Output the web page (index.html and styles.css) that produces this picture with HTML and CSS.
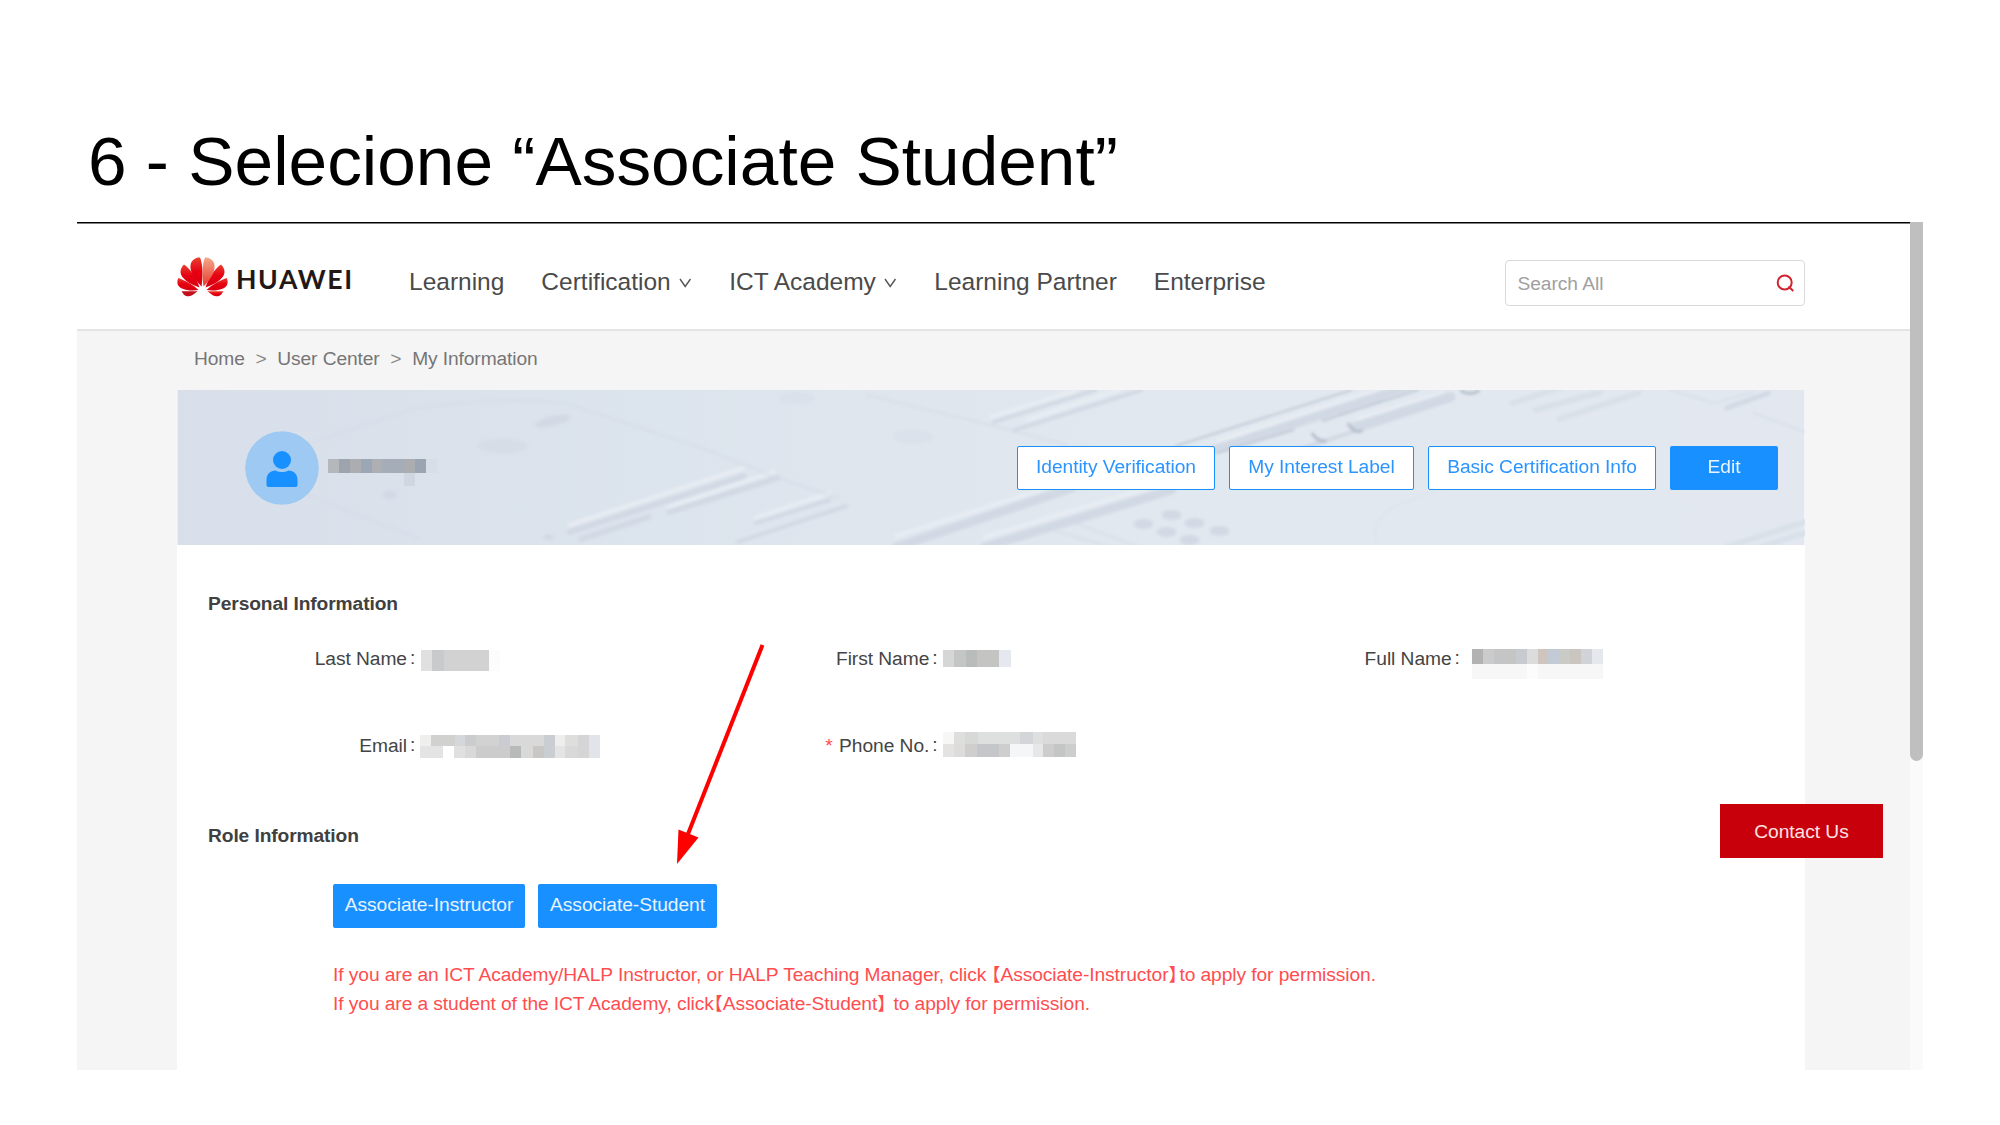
FILE: index.html
```html
<!DOCTYPE html>
<html lang="pt-BR">
<head>
<meta charset="utf-8">
<title>6 - Selecione “Associate Student”</title>
<link rel="stylesheet" href="styles.css">
</head>
<body>
<h1 class="title">6 - Selecione “Associate Student”</h1>
<div class="screen">
  <div class="page">
    <header class="header">
      <div class="logo">
        <svg class="flower" viewBox="0 0 51 40" width="51" height="40">
          <defs>
            <linearGradient id="petal" x1="0" y1="0" x2="0" y2="1"><stop offset="0" stop-color="#e8402f"/><stop offset=".5" stop-color="#e60012"/><stop offset="1" stop-color="#d8000f"/></linearGradient>
            <linearGradient id="petalLight" x1="0" y1="0" x2="0" y2="1"><stop offset="0" stop-color="#f3a98a"/><stop offset="1" stop-color="#e8372b"/></linearGradient>
          </defs>
          <g fill="url(#petal)">
            <path d="M24.500 29.500C15 20 12 12 14 6c1.500-3.500 5-5.500 9-5.500 3 7 3 18 1.500 29z"/>
            <path d="M22.500 30.500C12 27 3.500 21 3.500 15c0-3 1.500-5.500 3.500-7.500 6 4 12.500 13 15.500 23z"/>
            <path d="M21.500 33C12 34.500 2 32.500.6 27c-.6-3 0-4.500.8-6C8 23.500 16.500 28 21.500 33z"/>
            <path d="M20.500 34.200C15 39 12 40 9 39c-2-.7-3-2.500-4.500-4.800z" fill="#c5101b"/>
            <path d="M28.500 30.500C39 27 47.500 21 47.500 15c0-3-1.500-5.500-3.500-7.500-6 4-12.500 13-15.500 23z"/>
            <path d="M29.500 33C39 34.500 49 32.500 50.400 27c.6-3 0-4.500-.8-6C43 23.500 34.500 28 29.500 33z"/>
            <path d="M30.500 34.200C36 39 39 40 42 39c2-.7 3-2.500 4.500-4.800z"/>
          </g>
          <path d="M26.500 29.500C36 20 39 12 37 6c-1.500-3.500-5-5.500-9-5.500-3 7-3 18-1.500 29z" fill="url(#petalLight)"/>
        </svg>
        <span class="wordmark">HUAWEI</span>
      </div>
      <nav class="nav">
        <a>Learning</a>
        <a class="drop">Certification<svg width="13" height="10" viewBox="0 0 13 10"><path d="M1 1l5.200 7.500L11.500 1"/></svg></a>
        <a class="drop">ICT Academy<svg width="13" height="10" viewBox="0 0 13 10"><path d="M1 1l5.200 7.500L11.500 1"/></svg></a>
        <a>Learning Partner</a>
        <a>Enterprise</a>
      </nav>
      <div class="search">
        <span>Search All</span>
        <svg width="19" height="19" viewBox="0 0 19 19"><circle cx="8.700" cy="8.500" r="7"/><path d="M12.500 12.500l4.800 4.500"/></svg>
      </div>
    </header>
    <div class="crumbs"><span>Home</span><i>&gt;</i><span>User Center</span><i>&gt;</i><span>My Information</span></div>
    <main class="panel">
      <section class="banner">
        <svg class="circuit" viewBox="0 0 1627 155" width="1627" height="155">
          <defs>
            <linearGradient id="sky"><stop offset="0" stop-color="#d8dfea"/><stop offset=".3" stop-color="#dce4ed"/><stop offset=".6" stop-color="#e2e8ef"/><stop offset="1" stop-color="#e3e8f0"/></linearGradient>
            <filter id="soft" x="-5%" y="-5%" width="110%" height="110%"><feGaussianBlur stdDeviation="1.500"/></filter>
          </defs>
          <rect width="1627" height="155" fill="url(#sky)"/>
          <g filter="url(#soft)" fill="none" stroke-linecap="round">
            <g stroke="#e8edf3" stroke-width="4">
              <path d="M392 135L566 78M492 117L596 82M578 128L652 103M719 146L894 90M807 147L990 92M814 27L900 0M850 30L940 0M1040 51L1200 0M1180 29L1265 3"/>
            </g>
            <g stroke="#d1d9e4" stroke-width="6">
              <path d="M392 142L566 86M404 149L471 127M492 122L600 88"/>
              <path d="M578 133L652 110M560 152L669 116" stroke-width="4"/>
              <path d="M719 157L894 98M807 157L994 100M1036 60L1239 -6" stroke-width="9"/>
              <path d="M816 32L918 0M837 40L964 0M1120 60L1260 14" stroke-width="4"/>
              <path d="M1178 37L1273 7" stroke-width="10"/>
              <path d="M1549 18L1591 3" stroke-width="5"/>
            </g>
            <path d="M998 56L1174 0M1040 63L1116 40M1162 25L1241 0M1145 31L1205 11" stroke="#b6c1d0" stroke-width="1.600"/>
            <path d="M1135 44q6 8 13 7M1171 34q5 9 13 7M1284 1q8 5 17 0" stroke="#b3becb" stroke-width="3"/>
            <path d="M1335 13L1392 -5M1358 20L1423 2M1382 29L1461 3M1549 157L1627 132M1574 160L1627 143" stroke="#d8e0e9" stroke-width="6"/>
            <path d="M130 54Q200 30 240 18Q330 6 390 14L530 60L600 88L660 108M690 5L816 36L890 55M1492 0L1537 13L1576 2M1576 23L1627 42M130 105L240 148M875 140L950 162M900 134L970 160" stroke="#d4dce7" stroke-width="3" opacity=".5"/>
            <path d="M1200 155Q1190 130 1220 115L1300 85" stroke="#d4dce7" stroke-width="2" opacity=".35"/>
          </g>
          <g filter="url(#soft)" fill="#d1d9e4">
            <ellipse cx="375" cy="31" rx="18" ry="5" transform="rotate(-14 375 31)"/>
            <ellipse cx="325" cy="56" rx="25" ry="7" opacity=".55"/>
            <ellipse cx="212" cy="105" rx="7" ry="4"/><ellipse cx="371" cy="147" rx="5" ry="3"/>
            <ellipse cx="736" cy="47" rx="20" ry="7" opacity=".35"/><ellipse cx="619" cy="8" rx="18" ry="6" opacity=".35"/>
            <ellipse cx="966" cy="134" rx="10" ry="5"/><ellipse cx="994" cy="125" rx="10" ry="5"/><ellipse cx="1017" cy="133" rx="10" ry="5"/>
            <ellipse cx="989" cy="142" rx="10" ry="5"/><ellipse cx="1042" cy="141" rx="10" ry="5"/><ellipse cx="1012" cy="150" rx="10" ry="5"/>
          </g>
        </svg>
        <div class="user">
          <svg class="avatar" width="74" height="74" viewBox="0 0 74 74"><circle cx="37" cy="37" r="36.800" fill="#9dc9f2"/><circle cx="37" cy="29" r="9" fill="#1890ff"/><path d="M21.500 54V49c0-6 4-9.500 9-9.500 4 2 9 2 13 0 5 0 9 3.500 9 9.500v5q0 2-2 2h-27q-2 0-2-2z" fill="#1890ff"/></svg>
          <svg class="mosaic" width="109" height="28" viewBox="0 0 109 28"><path fill="#b5b8bb" d="M0 0h11v14H0z"/><path fill="#9ea4ae" d="M11 0h11v14H11z"/><path fill="#abadb0" d="M22 0h11v14H22z"/><path fill="#9ca7b6" d="M33 0h11v14H33z"/><path fill="#adafb2" d="M44 0h10v14H44z"/><path fill="#a4adb8" d="M54 0h22v14H54z"/><path fill="#abadb1" d="M76 0h11v14H76z"/><path fill="#9ba4b1" d="M87 0h11v14H87z"/><path fill="#d8dee8" d="M98 0h11v14H98z"/><path fill="#d0d7e0" d="M76 14h11v13H76z"/></svg>
        </div>
        <div class="actions">
          <button class="btn outline b1">Identity Verification</button><button class="btn outline b2">My Interest Label</button><button class="btn outline b3">Basic Certification Info</button><button class="btn solid b4">Edit</button>
        </div>
      </section>
      <h2 class="heading personal">Personal Information</h2>
      <div class="fields">
        <div class="field"><label>Last Name</label><b>:</b>
          <svg class="mosaic" width="80" height="21" viewBox="0 0 80 21"><path fill="#e0e0e0" d="M0 0h11v21H0z"/><path fill="#c9cacc" d="M11 0h12v21H11z"/><path fill="#d2d2d2" d="M23 0h45v21H23z"/><path fill="#fcfcfc" d="M68 0h11v21H68z"/></svg></div>
        <div class="field"><label>First Name</label><b>:</b>
          <svg class="mosaic" width="69" height="17" viewBox="0 0 69 17"><path fill="#d6d6d6" d="M0 0h11v17H0z"/><path fill="#c4c5c5" d="M11 0h12v17H11z"/><path fill="#b8bcbb" d="M23 0h11v17H23z"/><path fill="#c4c4c2" d="M34 0h22v17H34z"/><path fill="#e5e8ef" d="M56 0h12v17H56z"/></svg></div>
        <div class="field full"><label>Full Name</label><b>:</b>
          <svg class="mosaic" width="131" height="30" viewBox="0 0 131 30"><path fill="#b2b2b3" d="M0 0h11v15H0z"/><path fill="#cacbcd" d="M11 0h11v15H11z"/><path fill="#c5c5c5" d="M22 0h22v15H22z"/><path fill="#c7cacf" d="M44 0h11v15H44z"/><path fill="#dcdcdc" d="M55 0h11v15H55z"/><path fill="#cfc4be" d="M66 0h10v15H66z"/><path fill="#c1cad5" d="M76 0h11v15H76z"/><path fill="#cacbc7" d="M87 0h11v15H87z"/><path fill="#cac5bf" d="M98 0h11v15H98z"/><path fill="#d0d3d7" d="M109 0h11v15h-11z"/><path fill="#e5e8ec" d="M120 0h11v15h-11z"/><path fill="#f7f7f7" d="M0 15h55v15H0zM66 15h65v15H66z"/><path fill="#fcfcfc" d="M55 15h11v15H55z"/></svg></div>
        <div class="field"><label>Email</label><b>:</b>
          <svg class="mosaic email" width="180" height="23" viewBox="0 0 180 23"><path fill="#efefee" d="M0 0h11v11H0z"/><path fill="#d1d1d0" d="M11 0h24v11H11z"/><path fill="#d5d7da" d="M35 0h10v11H35z"/><path fill="#cbcccd" d="M45 0h11v11H45z"/><path fill="#d2d2d2" d="M56 0h23v11H56z"/><path fill="#caccd1" d="M79 0h11v11H79z"/><path fill="#d9d9d9" d="M90 0h34v11H90z"/><path fill="#cacdd2" d="M124 0h11v23h-11z"/><path fill="#eeeeed" d="M135 0h10v11h-10z"/><path fill="#dedede" d="M145 0h13v11h-13z"/><path fill="#d6d5d6" d="M158 0h11v23h-11z"/><path fill="#e1e5e9" d="M169 0h11v23h-11z"/><path fill="#e4e4e5" d="M0 11h23v12H0zM135 11h10v12h-10z"/><path fill="#e0e0e0" d="M34 11h11v12H34z"/><path fill="#d9d9d9" d="M45 11h11v12H45zM101 11h12v12h-12zM145 11h13v12h-13z"/><path fill="#cccccd" d="M56 11h34v12H56z"/><path fill="#b7bab9" d="M90 11h11v12H90z"/><path fill="#c8c7c5" d="M113 11h11v12h-11z"/></svg></div>
        <div class="field"><label><em>*</em> Phone No.</label><b>:</b>
          <svg class="mosaic phone" width="134" height="25" viewBox="0 0 134 25"><path fill="#f7f7f7" d="M0 0h11v12H0z"/><path fill="#dedfdd" d="M11 0h11v12H11z"/><path fill="#d7d8d8" d="M22 0h13v12H22z"/><path fill="#dedfdf" d="M35 0h42v12H35zM90 0h10v12H90z"/><path fill="#d3d6d9" d="M77 0h13v12H77z"/><path fill="#dadada" d="M100 0h33v12h-33z"/><path fill="#e4e3e3" d="M0 12h11v13H0z"/><path fill="#dddcda" d="M11 12h11v13H11z"/><path fill="#cecece" d="M22 12h12v13H22zM56 12h11v13H56z"/><path fill="#c4c6c9" d="M34 12h22v13H34z"/><path fill="#f5f6f8" d="M67 12h23v13H67z"/><path fill="#e7e7e7" d="M90 12h10v13H90z"/><path fill="#cdcdcd" d="M100 12h33v13h-33z"/><path fill="#c4c5c5" d="M111 12h11v13h-11z"/></svg></div>
      </div>
      <h2 class="heading role">Role Information</h2>
      <div class="roles"><button class="btn solid r1">Associate-Instructor</button><button class="btn solid r2">Associate-Student</button></div>
      <div class="notes">
        <p class="n1">If you are an ICT Academy/HALP Instructor, or HALP Teaching Manager, click <span class="mark">【</span>Associate-Instructor<span class="mark close">】</span>to apply for permission.</p>
        <p class="n2">If you are a student of the ICT Academy, click<span class="mark">【</span>Associate-Student<span class="mark close">】</span> to apply for permission.</p>
      </div>
    </main>
  </div>
  <div class="scrollbar"><div class="thumb"></div></div>
  <button class="contact">Contact Us</button>
  <svg class="arrow" width="100" height="225" viewBox="0 0 100 225"><path d="M92.500 3L18 192" stroke="#f00" stroke-width="4" fill="none"/><path d="M7 222L8.500 187.500L28.500 195.500Z" fill="#f00"/></svg>
</div>
</body>
</html>
```
FILE: styles.css
```css
* { box-sizing: border-box; }
body {
  margin: 0;
  height: 1125px;
  overflow: hidden;
  background: #fff;
  font: 19.2px "Liberation Sans", Arial, "Noto Sans CJK SC", sans-serif;
  letter-spacing: -0.05px;
  color: #444;
}
h1, h2, p { margin: 0; }
button { font: inherit; letter-spacing: inherit; padding: 0; border: 0; }
.title {
  height: 222px;
  padding: 121px 0 0 88px;
  font-size: 69.4px;
  font-weight: 400;
  line-height: 80px;
  letter-spacing: 0;
  color: #000;
  white-space: nowrap;
}
.screen { position: relative; display: flex; width: 1846px; height: 848px; margin-left: 77px; }
.page { width: 1833px; height: 848px; background: #f5f5f5; overflow: hidden; }
.header {
  display: flex;
  height: 109px;
  padding-left: 100px;
  background: #fff;
  border-top: 1px solid #000;
  border-bottom: 2px solid #e4e4e4;
  box-shadow: inset 0 1px #808080;
}
.logo { display: flex; width: 232px; padding-top: 34px; }
.wordmark {
  margin-left: 8px;
  font: 700 26.6px/30px Lato, sans-serif;
  letter-spacing: 1.6px;
  color: #231815;
  padding-top: 7px;
}
.nav { display: flex; width: 1019px; padding-top: 42.5px; gap: 37px; font-size: 24.5px; line-height: 32px; letter-spacing: 0; color: #4a4a4a; white-space: nowrap; }
.drop { display: flex; gap: 8.5px; }
.drop svg { margin-top: 12px; fill: none; stroke: #555; stroke-width: 1.4; }
.search {
  display: flex;
  justify-content: space-between;
  width: 300px;
  height: 46px;
  margin: 37px 0 0 77px;
  padding: 0 9px 0 11.5px;
  border: 1.5px solid #d9d9d9;
  border-radius: 4px;
  line-height: 45px;
  color: #a0a0a0;
}
.search svg { margin-top: 13px; fill: none; stroke: #d2232f; stroke-width: 2; }
.crumbs { display: flex; height: 59px; padding-left: 117px; line-height: 56px; color: #757575; letter-spacing: -0.1px; }
.crumbs i { font-style: normal; width: 32.5px; text-align: center; color: #888; }
.panel { width: 1628px; height: 680px; margin-left: 100px; background: #fff; }
.banner { position: relative; display: flex; justify-content: space-between; height: 155px; }
.circuit { position: absolute; inset: 0; width: 100%; }
.user { position: relative; display: flex; padding: 41px 0 0 68px; gap: 9px; }
.user .mosaic { margin-top: 28px; }
.mosaic { shape-rendering: crispEdges; flex: none; }
.actions { position: relative; display: flex; gap: 14px; padding: 56px 27px 0 0; }
.btn { height: 44px; border-radius: 2px; white-space: nowrap; padding-bottom: 3px; }
.outline { background: #fff; border: 1.5px solid #1890ff; color: #2c94ff; }
.solid { background: #1890ff; color: #e8f4ff; }
.b1 { width: 198px; } .b2 { width: 185px; } .b3 { width: 228px; } .b4 { width: 108px; }
.heading { padding-left: 31px; font-size: 19.2px; line-height: 24px; color: #404040; letter-spacing: -0.1px; }
.personal { margin-top: 47px; }
.fields { display: grid; grid-template-columns: repeat(3, 522.3px); grid-auto-rows: 87px; margin: 31px 0 0 0.5px; height: 174px; }
.field { display: flex; line-height: 24px; }
.field label { width: 229.5px; text-align: right; white-space: nowrap; }
.field b { width: 13px; padding-left: 3px; font-weight: 400; line-height: 21px; }
.field .mosaic { margin: 3px 0 0 1px; }
.field.full .mosaic { margin: 2px 0 0 7px; }
.field .email { margin: 1px 0 0 0; }
.field .phone { margin-top: -2px; }
.field em { color: #ff4d4f; font-style: normal; margin-right: -1px; padding-right: 2px; }
.role { margin-top: 2.5px; }
.roles { display: flex; gap: 13px; margin: 36px 0 0 156px; }
.r1 { width: 192px; } .r2 { width: 179px; }
.roles .btn { padding-bottom: 1px; }
.notes { margin: 33.500px 0 0 156px; line-height: 28.5px; color: #ff4d4f; white-space: nowrap; letter-spacing: -0.075px; }
.mark { font-family: "Noto Sans CJK SC", sans-serif; font-size: 18px; line-height: 16px; font-feature-settings: "halt"; }
.close { margin-right: 2px; }
.scrollbar { width: 13px; height: 848px; background: #fafafa; }
.thumb { height: 539px; background: #bfbfbf; border-radius: 0 0 7px 7px; }
.contact { position: absolute; left: 1643px; top: 582px; width: 163px; height: 54px; padding-top: 1px; background: #c7000b; color: #fbe3e4; }
.arrow { position: absolute; left: 593px; top: 420px; }
```
